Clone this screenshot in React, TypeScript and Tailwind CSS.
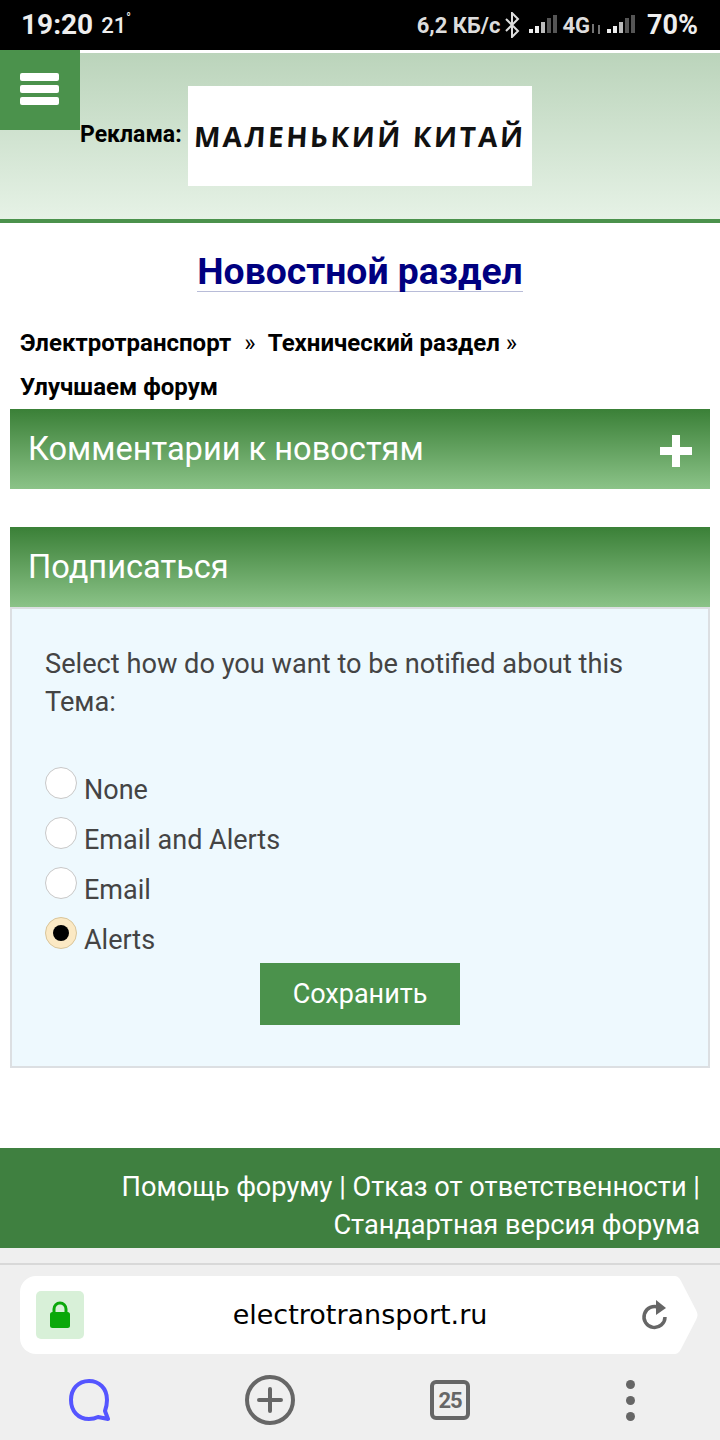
import React from "react";

const OPTIONS = [
  { label: "None", checked: false },
  { label: "Email and Alerts", checked: false },
  { label: "Email", checked: false },
  { label: "Alerts", checked: true },
];

function Signal({ className }: { className?: string }) {
  return (
    <svg width="28" height="20" viewBox="0 0 28 20" className={className}>
      <rect x="0" y="14" width="4" height="4" fill="#eee" />
      <rect x="6" y="11" width="4" height="7" fill="#eee" />
      <rect x="12" y="7" width="4" height="11" fill="#bbb" />
      <rect x="18" y="3" width="4" height="15" fill="#555" />
      <rect x="24" y="0" width="4" height="18" fill="#555" />
    </svg>
  );
}

function StatusBar() {
  return (
    <div className="h-[50px] bg-black flex items-center pl-[21px] pr-[22px] text-[#eee] font-bold">
      <span className="text-[28px]">19:20</span>
      <span className="text-[22px] ml-[8px] font-medium">21</span>
      <span className="text-[12px] self-start mt-[9px]">°</span>
      <span className="ml-auto text-[22px] text-[#ddd]">6,2 КБ/с</span>
      <svg width="16" height="26" viewBox="0 0 16 26" className="ml-[4px]" fill="none" stroke="#ddd" strokeWidth="2">
        <path d="M2 7l12 12-6 6V1l6 6L2 19" />
      </svg>
      <Signal className="ml-[9px]" />
      <span className="text-[22px] ml-[5px] text-[#ddd]">4G</span>
      <svg width="12" height="10" viewBox="0 0 12 10" className="mt-[8px]" stroke="#999" strokeWidth="1.500">
        <path d="M3 0v9M9 1v9" />
      </svg>
      <Signal className="ml-[5px]" />
      <span className="text-[27px] ml-[12px]">70%</span>
    </div>
  );
}

function Header() {
  return (
    <header className="relative h-[173px] border-t-[3px] border-white border-b-4 border-b-[#4b924c] bg-gradient-to-b from-[#bbd4bb] to-[#e6f2e6] box-border">
      <div className="absolute left-0 top-[-3px] w-[80px] h-[80px] bg-[#4b924c] flex flex-col items-center gap-[4px] pt-[23px] pr-[1px]">
        <div className="w-[39px] h-[8px] bg-white rounded-[2px]" />
        <div className="w-[39px] h-[8px] bg-white rounded-[2px]" />
        <div className="w-[39px] h-[8px] bg-white rounded-[2px]" />
      </div>
      <div className="flex items-center pl-[80px] pt-[33px]">
        <span className="text-[23px] font-bold text-black w-[108px] leading-none mb-[3px]">Реклама:</span>
        <div className="w-[344px] h-[100px] bg-white flex items-center justify-center overflow-hidden">
          <span className="text-[28px] font-bold text-[#111] tracking-[2.5px] -skew-x-3 font-['Open_Sans',sans-serif] whitespace-nowrap">
            МАЛЕНЬКИЙ КИТАЙ
          </span>
        </div>
      </div>
    </header>
  );
}

function SectionHeader({ title, plus }: { title: string; plus?: boolean }) {
  return (
    <div className="h-[80px] bg-gradient-to-b from-[#3a8037] to-[#8bc388] flex items-center justify-between pl-[18px] pr-[17px]">
      <span className="text-[32.6px] text-white">{title}</span>
      {plus && (
        <svg width="34" height="34" viewBox="0 0 34 34" className="mt-[4px]">
          <path d="M13 1h8v12h12v8H21v12h-8V21H1v-8h12z" fill="#fff" />
        </svg>
      )}
    </div>
  );
}

function Radio({ checked }: { checked: boolean }) {
  return (
    <span
      className={
        checked
          ? "w-[32px] h-[32px] rounded-full border border-[#d9c59a] bg-[#fbe9c4] flex items-center justify-center shrink-0"
          : "w-[32px] h-[32px] rounded-full border border-[#c8c8c8] bg-white flex items-center justify-center shrink-0"
      }
    >
      {checked && <span className="w-[16px] h-[16px] rounded-full bg-black" />}
    </span>
  );
}

function SubscribeBox() {
  return (
    <div className="h-[461px] bg-[#eef9fe] border-2 border-t-2 border-[#dcdfe2] pl-[33px] pr-[33px] pt-[36px] box-border">
      <p className="text-[27.2px] leading-[38px] text-[#444]">Select how do you want to be notified about this Тема:</p>
      <div className="mt-[46px] flex flex-col">
        {OPTIONS.map((o) => (
          <label key={o.label} className="h-[50px] flex items-start gap-[7px]">
            <Radio checked={o.checked} />
            <span className="text-[27px] leading-[38px] text-[#444] mt-[4px]">{o.label}</span>
          </label>
        ))}
      </div>
      <div className="flex justify-center mt-[-4px]">
        <button className="w-[200px] h-[62px] bg-[#4b924c] text-white text-[27px]">Сохранить</button>
      </div>
    </div>
  );
}

function BrowserBar() {
  return (
    <div className="h-[192px] bg-[#efefef]">
      <div className="h-[15px] border-b-2 border-[#d8d8d8] box-content" />
      <div className="flex items-stretch h-[78px] ml-[20px] mr-[20px] mt-[11px]">
        <div className="flex-1 bg-white rounded-l-[16px] flex items-center pl-[16px]">
          <div className="w-[48px] h-[48px] bg-[#d8f0d8] rounded-[5px] flex items-center justify-center">
            <svg width="22" height="28" viewBox="0 0 22 28">
              <path d="M5 13V8a6 6 0 0 1 12 0v5" fill="none" stroke="#0aa80a" strokeWidth="3" />
              <rect x="1" y="11" width="20" height="16" rx="2.500" fill="#0aa80a" />
            </svg>
          </div>
          <span className="flex-1 text-center text-[27px] text-black font-['DejaVu_Sans',sans-serif] pr-[5px]">electrotransport.ru</span>
          <svg width="28" height="32" viewBox="0 0 28 32" fill="none" className="mr-[3px]">
            <path d="M18 8.500A10.500 10.500 0 1 0 24 18" stroke="#666" strokeWidth="3.500" />
            <path d="M15 1l10 8-10 7z" fill="#666" />
          </svg>
        </div>
        <svg width="28" height="78" viewBox="0 0 28 78" className="shrink-0">
          <path d="M0 0h2c3 0 5 1 7 5l15 29c2 4 2 6 0 10L9 73c-2 4-4 5-7 5H0z" fill="#fff" />
        </svg>
      </div>
      <div className="flex items-center h-[92px]">
        <div className="w-[180px] flex justify-center">
          <svg width="42" height="42" viewBox="0 0 42 42" fill="none">
            <path d="M20 2C30 2 38 9 38 21c0 5-1 8-2 11l3 8-10-2c-3 1.500-6 2-9 2C9 40 2 32 2 21S9 2 20 2z" stroke="#5555ff" strokeWidth="4" strokeLinejoin="round" />
          </svg>
        </div>
        <div className="w-[180px] flex justify-center">
          <svg width="50" height="50" viewBox="0 0 50 50" fill="none" stroke="#666">
            <circle cx="25" cy="25" r="23" strokeWidth="4" />
            <path d="M14 25h22M25 14v22" strokeWidth="4" strokeLinecap="round" />
          </svg>
        </div>
        <div className="w-[180px] flex justify-center">
          <div className="w-[40px] h-[40px] border-[4px] border-[#666] rounded-[6px] flex items-center justify-center text-[#666] text-[22px] font-bold tracking-[-1px]">25</div>
        </div>
        <div className="w-[180px] flex flex-col items-center gap-[7px]">
          <span className="w-[9px] h-[9px] rounded-full bg-[#666]" />
          <span className="w-[9px] h-[9px] rounded-full bg-[#666]" />
          <span className="w-[9px] h-[9px] rounded-full bg-[#666]" />
        </div>
      </div>
    </div>
  );
}

export default function App() {
  return (
    <div className="w-[720px] h-[1440px] bg-white overflow-hidden font-['Roboto',sans-serif]">
      <StatusBar />
      <Header />
      <div className="h-[186px] pt-[28px]">
        <h1 className="text-center">
          <span className="text-[37.3px] leading-[40px] font-bold text-[#000080] border-b border-[#b8bcd8] inline-block">Новостной раздел</span>
        </h1>
        <div className="mt-[29px] pl-[20px] text-[24px] font-bold leading-[44px] text-black">
          <div>
            Электротранспорт <span className="font-normal mx-[7px]">»</span> Технический раздел <span className="font-normal">»</span>
          </div>
          <div>Улучшаем форум</div>
        </div>
      </div>
      <div className="px-[10px]">
        <SectionHeader title="Комментарии к новостям" plus />
        <div className="h-[38px]" />
        <SectionHeader title="Подписаться" />
        <SubscribeBox />
      </div>
      <div className="h-[80px]" />
      <footer className="h-[100px] bg-[#3f8040] text-white text-[27.2px] leading-[38px] text-right pr-[20px] pl-[100px] pt-[20px]">
        Помощь форуму | Отказ от ответственности | Стандартная версия форума
      </footer>
      <BrowserBar />
    </div>
  );
}
